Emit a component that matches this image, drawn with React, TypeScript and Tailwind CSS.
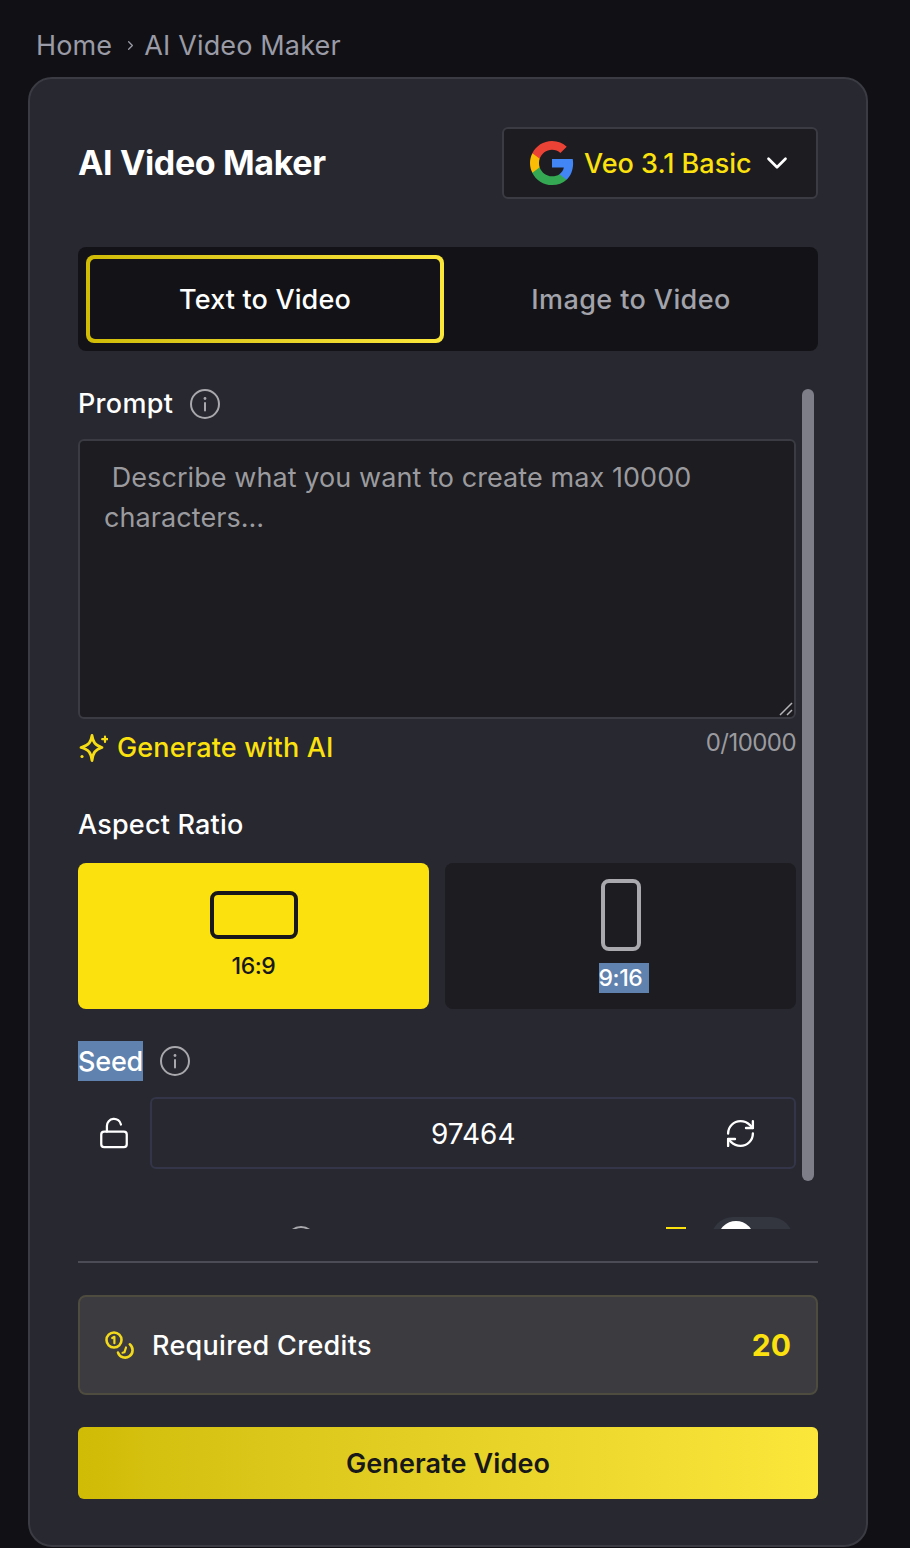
import React from 'react';
import { ChevronDown, ChevronRight, LockOpen, RefreshCw } from 'lucide-react';

const GoogleLogo = () => (
  <svg width="48" height="48" viewBox="0 0 24 24">
    <path fill="#4285F4" d="M22.56 12.25c0-.78-.07-1.53-.2-2.25H12v4.26h5.92c-.26 1.37-1.04 2.53-2.21 3.31v2.77h3.57c2.08-1.92 3.28-4.74 3.28-8.09z" />
    <path fill="#34A853" d="M12 23c2.97 0 5.46-.98 7.28-2.66l-3.57-2.77c-.98.66-2.23 1.06-3.71 1.06-2.86 0-5.29-1.93-6.16-4.53H2.18v2.84C3.99 20.53 7.7 23 12 23z" />
    <path fill="#FBBC05" d="M5.84 14.09c-.22-.66-.35-1.36-.35-2.09s.13-1.43.35-2.09V7.07H2.18C1.43 8.55 1 10.22 1 12s.43 3.45 1.18 4.93l2.85-2.22.81-.62z" />
    <path fill="#EA4335" d="M12 5.38c1.62 0 3.06.56 4.21 1.64l3.15-3.15C17.45 2.09 14.97 1 12 1 7.7 1 3.99 3.47 2.18 7.07l3.66 2.84c.87-2.6 3.3-4.53 6.16-4.53z" />
  </svg>
);

const InfoIcon = () => (
  <svg width="30" height="30" viewBox="0 0 30 30" fill="none" stroke="#a8a8ad" strokeWidth="2">
    <circle cx="15" cy="15" r="14" />
    <path d="M15 14v7.5" strokeLinecap="round" />
    <circle cx="15" cy="9.5" r="1.4" fill="#a8a8ad" stroke="none" />
  </svg>
);

const SparkleIcon = () => (
  <svg width="30" height="30" viewBox="0 0 30 30" fill="none" stroke="#f5dc14" strokeWidth="2.8" strokeLinejoin="round" strokeLinecap="round">
    <path d="M14 2.5 C15 9 17 12.5 24 14.5 C17 16.5 15 20 14 27.5 C13 20 11 16.5 3 14.5 C11 12.5 13 9 14 2.5 Z" />
    <path d="M27 3.5v5.5M24.2 6.2h5.6" strokeWidth="2.2" />
    <circle cx="4" cy="23.5" r="1.6" fill="#f5dc14" stroke="none" />
  </svg>
);

const CoinsIcon = () => (
  <svg width="30" height="30" viewBox="0 0 30 30" fill="none" stroke="#f2d91b" strokeWidth="2.6" strokeLinecap="round" strokeLinejoin="round">
    <circle cx="9" cy="10" r="7.5" />
    <path d="M7.2 8 9.4 6.8v6.4" strokeWidth="2.2" />
    <path d="M24.8 14.3A7.5 7.5 0 1 1 13 22.6" />
    <path d="M21 17.5l-1.6 4.8-1.8.4" strokeWidth="2.2" />
  </svg>
);

const App: React.FC = () => {
  return (
    <div className="min-h-[1548px] bg-[#111115] pl-7 pr-[42px] font-['Inter',sans-serif] overflow-hidden">
      <div className="h-[77px] pl-2 pt-[28px] flex items-start text-[27px] leading-9 tracking-[0.15px] text-[#9a9ba6]">
        <span>Home</span>
        <ChevronRight size={15} className="mt-[10px] ml-[11px] mr-[6px]" />
        <span>AI Video Maker</span>
      </div>

      <div className="h-[1470px] rounded-[24px] border-2 border-[#3a3b43] bg-[#272830] px-12 pt-12">
        <div className="flex items-center justify-between h-[72px]">
          <h1 className="text-[34px] font-bold text-white tracking-[-0.35px] pb-[2px]">AI Video Maker</h1>
          <button className="w-[316px] h-[72px] rounded-md border-2 border-[#3a3b43] bg-[#1c1c21] flex items-center pl-[24px] gap-[8px]">
            <GoogleLogo />
            <span className="text-[27px] font-medium text-[#fbe10d] pt-[3px]">Veo 3.1 Basic</span>
            <ChevronDown size={34} strokeWidth={1.9} className="text-white" />
          </button>
        </div>

        <div className="mt-12 h-[104px] rounded-lg bg-[#131317] p-2 flex">
          <div className="w-[358px] rounded-lg bg-gradient-to-r from-[#d0bc05] to-[#fbe73a] p-1">
            <div className="h-full rounded-[5px] bg-[#131317] flex items-center justify-center pt-[2px] text-[27px] font-medium tracking-[0.15px] text-white">
              Text to Video
            </div>
          </div>
          <div className="flex-1 flex items-center justify-center pl-2 pt-[2px] text-[27px] font-medium tracking-[0.4px] text-[#a2a3ab]">
            Image to Video
          </div>
        </div>

        <div className="mt-[36px] flex gap-[6px]">
          <div className="w-[718px] h-[842px] overflow-hidden">
            <div className="flex items-center gap-[17px] h-[34px]">
              <span className="text-[27px] leading-[34px] font-medium tracking-[0.3px] text-white">Prompt</span>
              <InfoIcon />
            </div>

            <div className="relative mt-[18px] h-[280px] rounded-md border-2 border-[#3a3b43] bg-[#1c1c21] px-6 pt-[17px] text-[27px] leading-10 tracking-[0.08px] text-[#9b9b9f]">
              <p>&nbsp;Describe what you want to create max 10000 characters…</p>
              <svg className="absolute right-[1px] bottom-[1px]" width="14" height="14" viewBox="0 0 14 14" stroke="#b5b5b8" strokeWidth="1.5">
                <path d="M1 13 13 1M8 13l5-5" />
              </svg>
            </div>

            <div className="mt-[9px] flex items-start justify-between">
              <div className="flex items-center gap-[9px] h-[40px] text-[27px] font-medium tracking-[0.15px] text-[#fbe10d]">
                <SparkleIcon />
                <span>Generate with AI</span>
              </div>
              <span className="text-[24px] leading-[32px] tracking-[-0.55px] text-[#9b9b9f] mt-[-1px]">0/10000</span>
            </div>

            <div className="mt-[36px] h-[40px] pt-[2px] flex items-center text-[27px] font-medium tracking-[0.2px] text-white">Aspect Ratio</div>

            <div className="mt-[19px] grid grid-cols-2 gap-4">
              <div className="h-[146px] rounded-lg bg-[#fbe10d] flex flex-col items-center pt-7 text-[#18181b]">
                <div className="w-[88px] h-[48px] rounded-lg border-4 border-[#18181b]" />
                <span className="mt-[13px] text-[23px] font-medium leading-7 tracking-[-0.4px]">16:9</span>
              </div>
              <div className="h-[146px] rounded-lg bg-[#1c1c21] flex flex-col items-center pt-4">
                <div className="w-[40px] h-[72px] rounded-lg border-4 border-[#a9a9ae]" />
                <span className="mt-[12px] ml-[6px] h-[30px] w-[50px] bg-[#5f82ae] text-[23px] font-medium leading-[30px] tracking-[-0.4px] text-white">9:16</span>
              </div>
            </div>

            <div className="mt-[32px] flex items-center gap-[17px] h-[40px]">
              <span className="h-[40px] w-[65px] bg-[#5f82ae] text-[27px] font-medium leading-[42px] tracking-[-0.2px] text-white">Seed</span>
              <InfoIcon />
            </div>

            <div className="mt-4 flex items-center">
              <div className="w-[72px] flex justify-center">
                <LockOpen size={34} strokeWidth={1.6} className="text-white" />
              </div>
              <div className="flex-1 h-[72px] rounded-md border-2 border-[#343548] flex items-center pl-[279px] pr-[37px] justify-between">
                <span className="text-[28px] pt-[2px] text-white">97464</span>
                <RefreshCw size={33} strokeWidth={1.7} className="text-white" />
              </div>
            </div>

            <div className="mt-[48px] h-[40px] flex items-start">
              <div className="ml-[208px] mt-[9px]">
                <InfoIcon />
              </div>
              <div className="ml-[350px] mt-[10px] w-5 h-[3px] bg-[#fbe10d]" />
              <div className="ml-[25px] w-[82px] h-[44px] rounded-full bg-[#33363f] p-1 pl-[7px]">
                <div className="w-9 h-9 rounded-full bg-white" />
              </div>
            </div>
          </div>

          <div className="mt-[2px] w-3 h-[792px] rounded-full bg-[#7d7e88]" />
        </div>

        <div className="mt-[32px] h-[2px] bg-[#4b4c56]" />

        <div className="mt-[32px] h-[100px] rounded-lg border-2 border-[#4e4b3f] bg-[#3b3b40] flex items-center justify-between pl-[25px] pr-[25px]">
          <div className="flex items-center gap-[17px]">
            <CoinsIcon />
            <span className="text-[27px] font-medium tracking-[0.3px] text-white pt-[2px]">Required Credits</span>
          </div>
          <span className="text-[30px] font-bold text-[#fbe10d]">20</span>
        </div>

        <button className="mt-[32px] w-full h-[72px] rounded-md bg-gradient-to-r from-[#d0bc05] to-[#fbe73a] pt-[2px] text-[27px] font-semibold tracking-[0.1px] text-[#18181b]">
          Generate Video
        </button>
      </div>
    </div>
  );
};

export default App;
